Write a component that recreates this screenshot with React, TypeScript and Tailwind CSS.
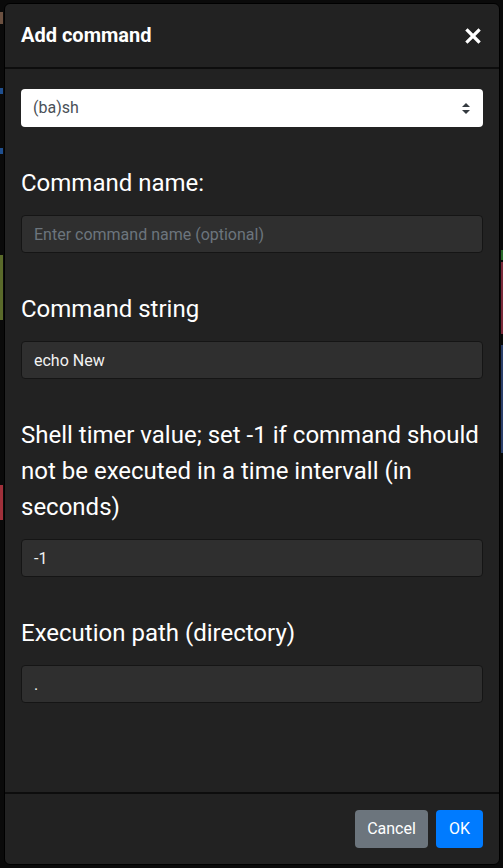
import React from "react";

const font = { fontFamily: "Roboto, 'Liberation Sans', sans-serif" };

function Label({ children }: { children: React.ReactNode }) {
  return <div className="text-[24px] leading-[36px] text-white">{children}</div>;
}

function Field({ value, placeholder }: { value?: string; placeholder?: string }) {
  return (
    <div className="h-[38px] w-full rounded-[4px] border border-[#151515] bg-[#2f2f2f] px-[12px] pt-[1px] flex items-center text-[16px]">
      {value !== undefined ? (
        <span className="text-[#f2f2f2]">{value}</span>
      ) : (
        <span className="text-[#6c757d]">{placeholder}</span>
      )}
    </div>
  );
}

function Group({ label, children }: { label: React.ReactNode; children: React.ReactNode }) {
  return (
    <div className="flex flex-col gap-[14px]">
      <Label>{label}</Label>
      {children}
    </div>
  );
}

export default function App() {
  return (
    <div className="w-[503px] h-[868px] bg-[#0a0a0a] overflow-hidden flex" style={font}>
      {/* background page peeking at left edge */}
      <div className="w-[4px] shrink-0 flex flex-col">
        <div className="mt-[12px] w-[3px] h-[12px] bg-[#6b5040]" />
        <div className="mt-[64px] w-[3px] h-[6px] bg-[#1f4f8f]" />
        <div className="mt-[54px] w-[3px] h-[6px] bg-[#1f4f8f]" />
        <div className="mt-[101px] w-[3px] h-[65px] bg-[#5a6a2a]" />
        <div className="mt-[165px] w-[3px] h-[35px] bg-[#a0303a]" />
      </div>

      <div className="mt-[3px] w-[496px] h-[862px] shrink-0 rounded-[6px] border border-black bg-[#222222] flex flex-col overflow-hidden">
        {/* header */}
        <div className="h-[65px] shrink-0 border-b-2 border-[#0d0d0d] px-[16px] flex items-center justify-between">
          <div className="text-[20px] font-bold text-white leading-[30px] -mt-[2px]">Add command</div>
          <svg width="16" height="16" viewBox="0 0 16 16" className="mr-[2px]">
            <path d="M2.5 2.5 L13.5 13.5 M13.5 2.5 L2.5 13.5" stroke="white" strokeWidth="3.2" strokeLinecap="square" />
          </svg>
        </div>

        {/* body */}
        <div className="flex-1 px-[16px] pt-[20px] flex flex-col gap-[38px]">
          <div className="h-[38px] w-full rounded-[4px] bg-white px-[12px] flex items-center justify-between text-[16px] text-[#495057]">
            <span>(ba)sh</span>
            <svg width="8" height="11" viewBox="0 0 8 11" className="mr-[1px]">
              <path d="M4 0 L8 4 L0 4 Z" fill="#343a40" />
              <path d="M4 11 L8 7 L0 7 Z" fill="#343a40" />
            </svg>
          </div>

          <Group label="Command name:">
            <Field placeholder="Enter command name (optional)" />
          </Group>

          <Group label="Command string">
            <Field value="echo New" />
          </Group>

          <Group label="Shell timer value; set -1 if command should not be executed in a time intervall (in seconds)">
            <Field value="-1" />
          </Group>

          <Group label="Execution path (directory)">
            <Field value="." />
          </Group>
        </div>

        {/* footer */}
        <div className="h-[72px] shrink-0 border-t-2 border-[#0d0d0d] px-[16px] flex items-center justify-end gap-[8px]">
          <button className="h-[38px] w-[73px] rounded-[4px] bg-[#6c757d] text-white text-[16px]">Cancel</button>
          <button className="h-[38px] w-[47px] rounded-[4px] bg-[#007bff] text-white text-[16px]">OK</button>
        </div>
      </div>

      {/* background page peeking at right edge */}
      <div className="flex-1 flex flex-col items-end">
        <div className="mt-[250px] w-[2px] h-[10px] bg-[#2c6a2c]" />
        <div className="mt-[2px] w-[2px] h-[72px] bg-[#7a2a3a]" />
        <div className="mt-[11px] w-[2px] h-[108px] bg-[#2a3f6a]" />
      </div>
    </div>
  );
}
